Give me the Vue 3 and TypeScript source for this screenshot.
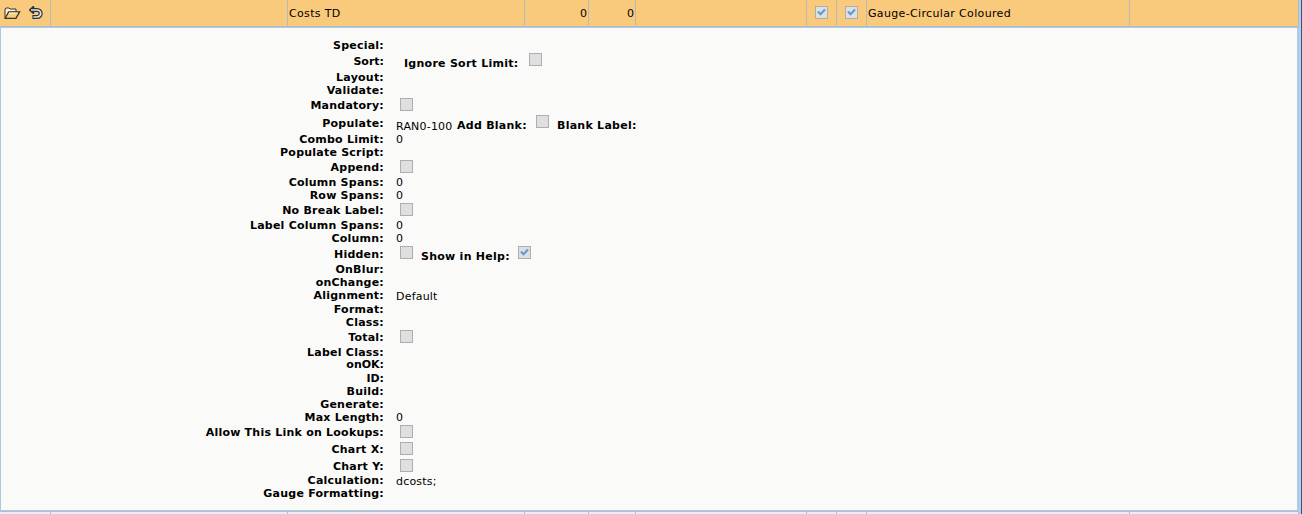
<script setup lang="ts">
interface Part {
  kind: 'text' | 'bold' | 'check'
  x: number
  dy: number
  text?: string
  on?: boolean
}
interface Row {
  label: string
  h: number
  parts?: Part[]
}

const check = (x = 400, dy = 0, on = false): Part => ({ kind: 'check', x, dy, on })
const text = (value: string, dy = 0): Part => ({ kind: 'text', x: 396, dy, text: value })
const bold = (value: string, x: number): Part => ({ kind: 'bold', x, dy: 2, text: value })

const rows: Row[] = [
  { label: 'Special:', h: 16 },
  { label: 'Sort:', h: 16, parts: [bold('Ignore Sort Limit:', 404), check(529, -1)] },
  { label: 'Layout:', h: 13 },
  { label: 'Validate:', h: 15 },
  { label: 'Mandatory:', h: 18, parts: [check()] },
  { label: 'Populate:', h: 16, parts: [text('RAN0-100', 3), bold('Add Blank:', 457), check(536, -1), bold('Blank Label:', 557)] },
  { label: 'Combo Limit:', h: 13, parts: [text('0')] },
  { label: 'Populate Script:', h: 15 },
  { label: 'Append:', h: 15, parts: [check()] },
  { label: 'Column Spans:', h: 13, parts: [text('0')] },
  { label: 'Row Spans:', h: 15, parts: [text('0')] },
  { label: 'No Break Label:', h: 15, parts: [check()] },
  { label: 'Label Column Spans:', h: 13, parts: [text('0')] },
  { label: 'Column:', h: 16, parts: [text('0')] },
  { label: 'Hidden:', h: 15, parts: [check(400, -1), bold('Show in Help:', 421), check(518, -1, true)] },
  { label: 'OnBlur:', h: 13 },
  { label: 'onChange:', h: 13 },
  { label: 'Alignment:', h: 14, parts: [text('Default', 1)] },
  { label: 'Format:', h: 13 },
  { label: 'Class:', h: 15 },
  { label: 'Total:', h: 15, parts: [check()] },
  { label: 'Label Class:', h: 12 },
  { label: 'onOK:', h: 14 },
  { label: 'ID:', h: 13 },
  { label: 'Build:', h: 13 },
  { label: 'Generate:', h: 13 },
  { label: 'Max Length:', h: 15, parts: [text('0')] },
  { label: 'Allow This Link on Lookups:', h: 17, parts: [check()] },
  { label: 'Chart X:', h: 17, parts: [check()] },
  { label: 'Chart Y:', h: 14, parts: [check()] },
  { label: 'Calculation:', h: 13, parts: [text('dcosts;', 1)] },
  { label: 'Gauge Formatting:', h: 13 },
]

// Every part sits in one shared grid cell and is shifted by its own margins.
const place = (p: Part) => ({ marginLeft: `${p.x - 384}px`, marginTop: `${p.dy}px` })
</script>

<template>
  <div class="page">
    <div class="main">
      <div class="grid-row head">
        <div class="cell tools">
          <svg class="folder" width="17" height="13" viewBox="0 0 17 13">
            <path d="M1 11V2l1-1h3l1 1h6v3" fill="#fff0cf" stroke="#39352d" />
            <path d="M1.2 11.3 4.6 4.9h11l-3.7 6.4z" fill="#f7cf7d" stroke="#39352d" stroke-width="1.3" />
            <path d="M5 6.1h8.5" stroke="#fffbe8" />
          </svg>
          <svg class="undo" width="14" height="14" viewBox="0 0 14 14">
            <path d="M2 4h6.2a3.4 3.4 0 0 1 0 7H3.4" fill="none" stroke="#29343d" stroke-width="4" />
            <path d="M5 .4 1 4l4 3.6" fill="none" stroke="#29343d" stroke-width="2" />
            <path d="M2 4h6.2a3.4 3.4 0 0 1 0 7H4.4" fill="none" stroke="#e4e6e5" stroke-width="1.7" />
          </svg>
        </div>
        <div class="cell"></div>
        <div class="cell">Costs TD</div>
        <div class="cell num">0</div>
        <div class="cell num">0</div>
        <div class="cell"></div>
        <div v-for="n in 2" :key="n" class="cell mid">
          <span class="box"><svg width="11" height="11" viewBox="0 0 11 11"><path d="M2 4.5 4.5 7.3 9 2.5" /></svg></span>
        </div>
        <div class="cell">Gauge-Circular Coloured</div>
        <div class="cell last"></div>
      </div>
      <div class="panel">
        <div v-for="row in rows" :key="row.label" class="row" :style="{ height: `${row.h}px` }">
          <div class="label" :class="{ tight: row.label.length < 6 }">{{ row.label }}</div>
          <div class="values">
            <template v-for="(p, i) in row.parts" :key="i">
              <span v-if="p.kind === 'check'" class="box" :style="place(p)">
                <svg v-if="p.on" width="11" height="11" viewBox="0 0 11 11"><path d="M2 4.5 4.5 7.3 9 2.5" /></svg>
              </span>
              <span v-else :class="p.kind" :style="place(p)">{{ p.text }}</span>
            </template>
          </div>
        </div>
      </div>
      <div class="grid-row foot">
        <div v-for="n in 10" :key="n" class="cell"></div>
      </div>
    </div>
    <div class="edge"></div>
  </div>
</template>

<style>
body { overflow: hidden; background: #fafbf9; }
</style>
<style scoped>
.page {
  display: flex;
  width: 1302px;
  height: 514px;
  overflow: hidden;
  color: #000;
  font: 11px/13px Verdana, "DejaVu Sans", sans-serif;
}
.main { width: 1299px; flex: none; }
.edge { flex: 1; background: #b5d0e9; border-right: 1px solid #334f8d; }
.grid-row {
  display: grid;
  box-sizing: border-box;
  grid-template-columns: 51px 237px 237px 64px 47px 171px 30px 30px 263px 1fr;
}
.head { height: 27px; background: #f9ca7b; border-bottom: 1px solid #b5bac0; letter-spacing: 0.35px; }
.cell { box-sizing: border-box; border-right: 1px solid #b9bab8; padding: 7px 0 0 1px; white-space: nowrap; }
.num { text-align: right; padding-right: 1px; letter-spacing: 0; }
.mid { padding: 6px 0 0 8px; }
.tools { display: flex; padding: 6px 0 0 4px; gap: 8px; }
.folder { margin-top: 1px; }
.box {
  display: block;
  box-sizing: border-box;
  width: 13px;
  height: 13px;
  border: 1px solid #aeaeae;
  background: #dfdfdf;
}
.box svg { display: block; }
.box path { fill: none; stroke: #5b9bd5; stroke-width: 2; }
.panel {
  box-sizing: border-box;
  height: 485px;
  padding-top: 10px;
  border: 1px solid #a9cbe8;
  border-bottom: 1px solid #b8bec5;
  box-shadow: inset 0 -1px #a9cbe8, inset -1px 0 #b8c8d8;
  background: #fafbf9;
}
.row { display: grid; grid-template-columns: 383px 1fr; align-items: start; white-space: nowrap; }
.label, .bold { font-weight: bold; line-height: 15px; }
.label { text-align: right; letter-spacing: 0.23px; }
.label.tight { letter-spacing: 0; }
.bold { letter-spacing: 0.26px; }
.text { line-height: 15px; letter-spacing: 0.2px; }
.values { display: grid; align-items: start; justify-items: start; }
.values > * { grid-area: 1 / 1; }
.foot { height: 3px; background: #eeeafa; }
.foot .cell { padding: 0; border-color: #b9bdc8; }
</style>
